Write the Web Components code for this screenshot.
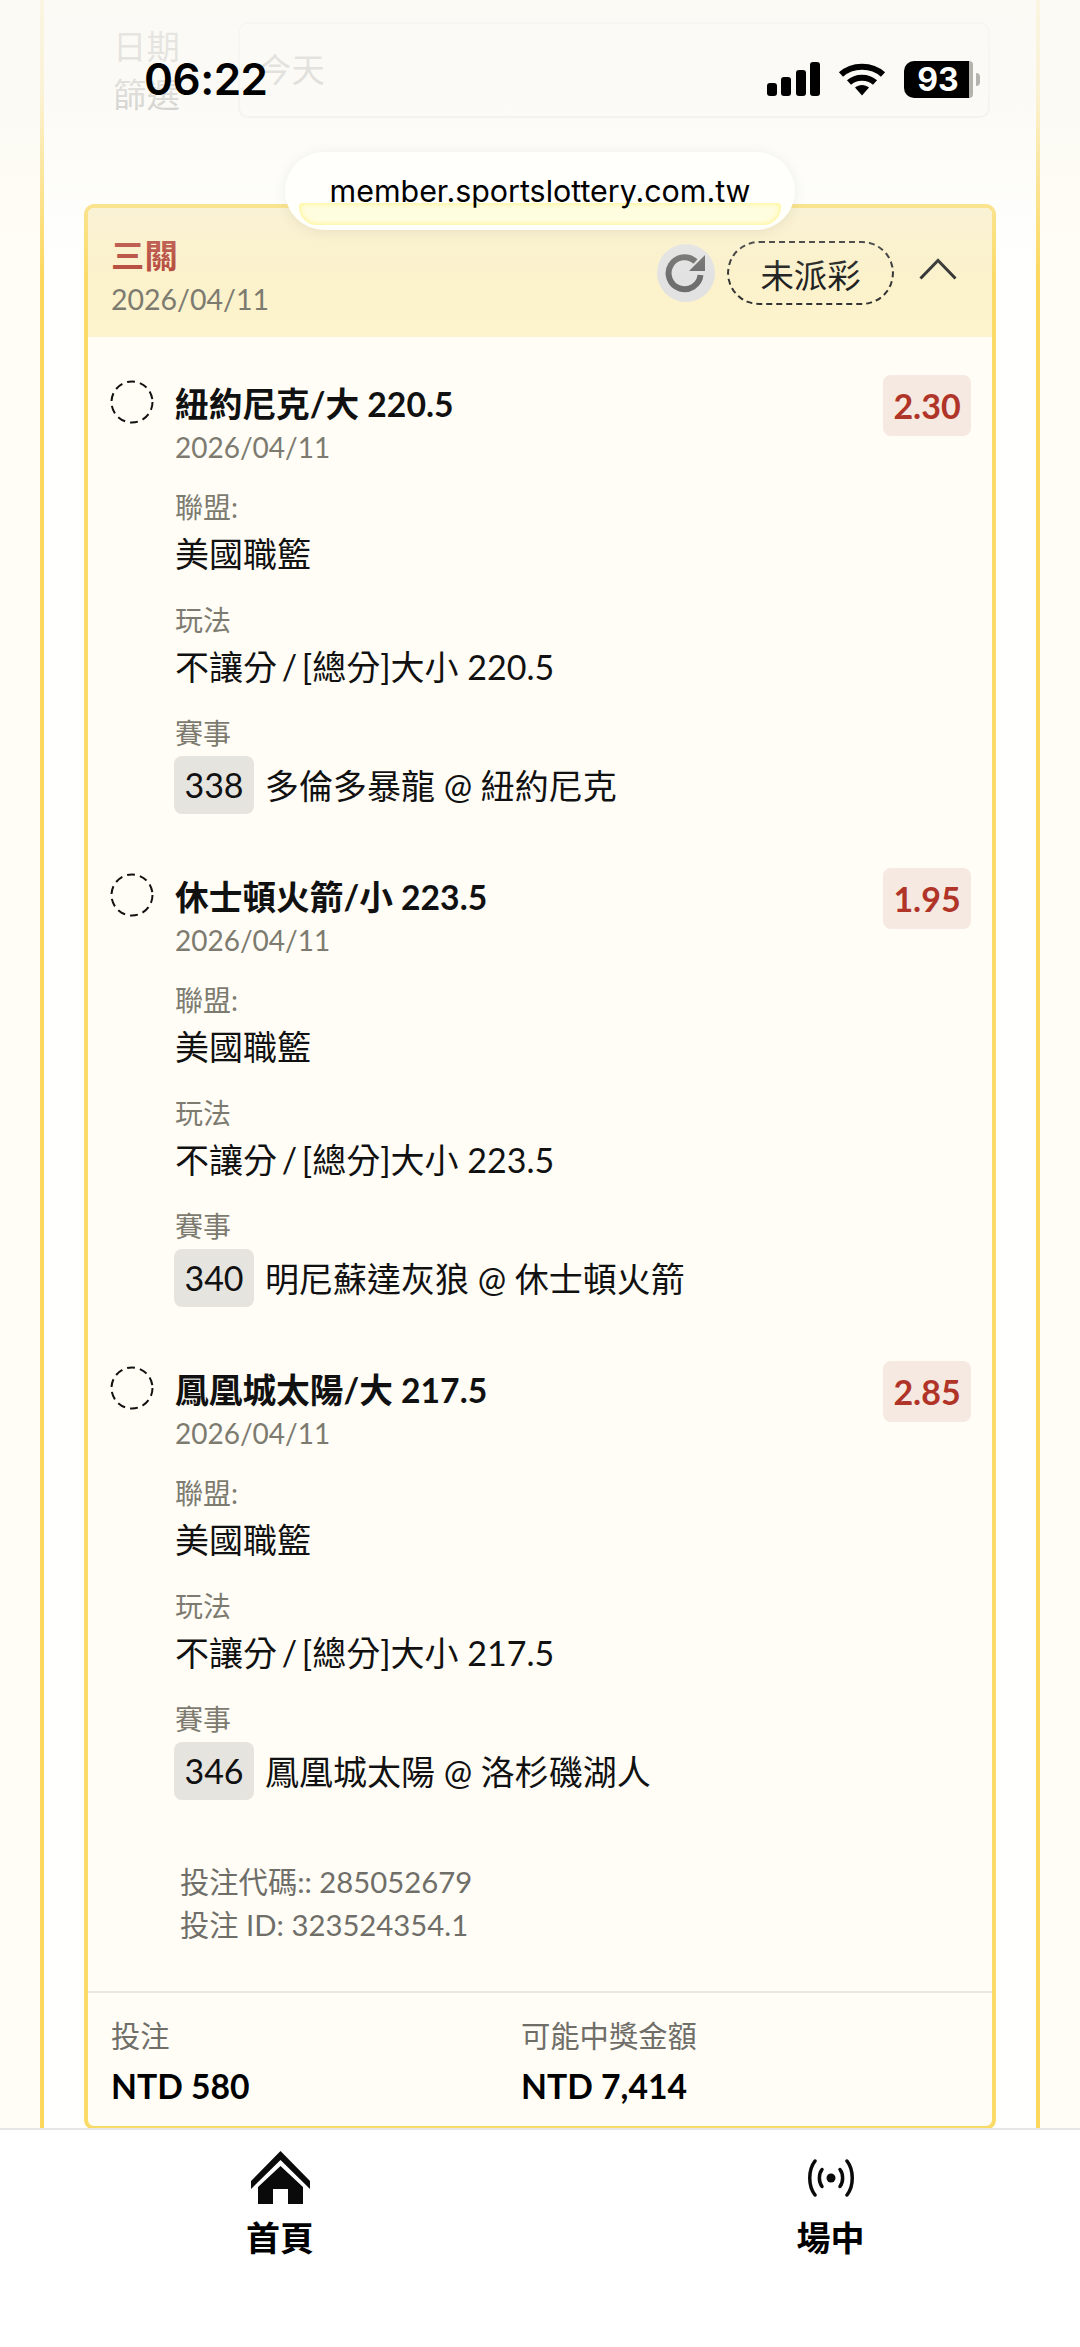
<!DOCTYPE html>
<html lang="zh-Hant">
<head>
<meta charset="utf-8">
<title>member.sportslottery.com.tw</title>
<style>
  html, body { margin: 0; height: 2347px; overflow: hidden; }
  body {
    position: relative;
    background: #fffdf5;
    font-family: Lato, "Noto Sans CJK TC", sans-serif;
    color: #111;
  }
  .panel {
    box-sizing: border-box;
    width: 1000px;
    height: 2347px;
    margin-left: 40px;
    padding: 22px 40px 0;
    background: #fffffd;
    border-left: 4px solid #fdd85d;
    border-right: 4px solid #fdd85d;
  }
  .tight { word-spacing: -4px; }
</style>
</head>
<body>
  <div class="panel">
    <date-filter>今天</date-filter>
    <bet-card>
      <span slot="type">三關</span>
      <span slot="date">2026/04/11</span>
      <span slot="status">未派彩</span>

      <bet-leg>
        <span slot="pick">紐約尼克/大 220.5</span>
        <span slot="date">2026/04/11</span>
        <span slot="odds">2.30</span>
        <span slot="market">不讓分<span class="tight"> / </span>[總分]大小 220.5</span>
        <span slot="code">338</span>
        <span slot="match">多倫多暴龍 @ 紐約尼克</span>
      </bet-leg>
      <bet-leg>
        <span slot="pick">休士頓火箭/小 223.5</span>
        <span slot="date">2026/04/11</span>
        <span slot="odds">1.95</span>
        <span slot="market">不讓分<span class="tight"> / </span>[總分]大小 223.5</span>
        <span slot="code">340</span>
        <span slot="match">明尼蘇達灰狼 @ 休士頓火箭</span>
      </bet-leg>
      <bet-leg>
        <span slot="pick">鳳凰城太陽/大 217.5</span>
        <span slot="date">2026/04/11</span>
        <span slot="odds">2.85</span>
        <span slot="market">不讓分<span class="tight"> / </span>[總分]大小 217.5</span>
        <span slot="code">346</span>
        <span slot="match">鳳凰城太陽 @ 洛杉磯湖人</span>
      </bet-leg>

      <span slot="code">投注代碼:: 285052679</span>
      <span slot="id">投注 ID: 323524354.1</span>
      <span slot="stake">NTD 580</span>
      <span slot="payout">NTD 7,414</span>
    </bet-card>
  </div>

  <status-bar></status-bar>
  <url-pill>member.sportslottery.com.tw</url-pill>
  <bottom-nav></bottom-nav>

<script>
const FONT = 'Lato, "Noto Sans CJK TC", sans-serif';

class DateFilter extends HTMLElement {
  constructor() {
    super();
    this.attachShadow({ mode: 'open' }).innerHTML = `
      <style>
        :host { display: flex; height: 96px; font-family: ${FONT}; }
        .label { width: 121px; padding-left: 29px; box-sizing: border-box; font-size: 33.4px; line-height: 48px; color: #777; }
        .box {
          width: 752px; margin-left: 33px; box-sizing: border-box;
          border: 2px solid #e6e6e6; border-radius: 10px; background: #fffffd;
          display: flex; align-items: center; padding: 0 0 6px 18px;
          font-size: 33.4px; color: #777;
        }
      </style>
      <div class="label">日期<br>篩選</div>
      <div class="box"><slot></slot></div>`;
  }
}

class BetCard extends HTMLElement {
  constructor() {
    super();
    this.attachShadow({ mode: 'open' }).innerHTML = `
      <style>
        :host {
          display: block; margin-top: 86px; box-sizing: border-box; height: 1926px;
          border: 4px solid #fbdb67; border-radius: 10px; background: #fffdf6;
          font-family: ${FONT}; overflow: hidden;
        }
        header {
          height: 129px; box-sizing: border-box; padding: 0 20px 0 23px;
          display: flex; align-items: flex-start; justify-content: space-between;
          background: linear-gradient(#f9efc8, #fdf3cd);
        }
        .type { font-size: 33.4px; line-height: 44px; font-weight: 700; color: #b5483a; margin-top: 25px; }
        .date { font-size: 28.5px; line-height: 38px; color: #7d7b70; margin-top: 3px; }
        .actions { display: flex; align-items: center; margin-top: 33px; }
        .refresh { width: 58px; height: 58px; border-radius: 50%; background: #e2e2e2; margin-right: 12px; }
        .refresh svg { display: block; }
        .status {
          box-sizing: border-box; width: 167px; height: 64px; border: 2px dashed #333; border-radius: 32px;
          font-size: 33.4px; color: #222; display: flex; align-items: center; justify-content: center;
        }
        .chev { display: block; margin: -8px 15px 0 25px; }
        .legs { padding: 45px 22px 0; display: flex; flex-direction: column; gap: 61.5px; box-sizing: border-box; }
        .refs { height: 191px; box-sizing: border-box; padding: 60px 0 0 92px; font-size: 29.3px; line-height: 43px; color: #6f6e68; }
        footer { border-top: 2px solid #e9e7e1; padding: 23px 22px 0 23px; display: grid; grid-template-columns: 410px 1fr; }
        footer small { display: block; font-size: 29.3px; line-height: 40px; color: #6f6e68; }
        footer b { display: block; font-size: 33.7px; line-height: 44px; font-weight: 700; color: #000; margin-top: 8px; }
      </style>
      <header>
        <div>
          <div class="type"><slot name="type"></slot></div>
          <div class="date"><slot name="date"></slot></div>
        </div>
        <div class="actions">
          <div class="refresh">
            <svg width="58" height="58" viewBox="0 0 58 58">
              <path d="M38.5 17.5A16 16 0 1 0 43.5 31" fill="none" stroke="#6e6e6e" stroke-width="6"/>
              <path d="M48 11V27H32Z" fill="#6e6e6e"/>
            </svg>
          </div>
          <div class="status"><slot name="status"></slot></div>
          <svg class="chev" width="38" height="22" viewBox="0 0 38 22"><path d="M1.500 20.500L19 2.500L36.500 20.500" fill="none" stroke="#333" stroke-width="3"/></svg>
        </div>
      </header>
      <div class="legs"><slot></slot></div>
      <div class="refs">
        <div><slot name="code"></slot></div>
        <div><slot name="id"></slot></div>
      </div>
      <footer>
        <div><small>投注</small><b><slot name="stake"></slot></b></div>
        <div><small>可能中獎金額</small><b><slot name="payout"></slot></b></div>
      </footer>`;
  }
}

class BetLeg extends HTMLElement {
  constructor() {
    super();
    this.attachShadow({ mode: 'open' }).innerHTML = `
      <style>
        :host { display: grid; grid-template-columns: 65px 1fr auto; font-family: ${FONT}; }
        svg { display: block; margin-top: -2px; }
        .body { min-width: 0; }
        .pick { font-size: 33.7px; line-height: 44px; font-weight: 700; color: #111; }
        .date { font-size: 28px; line-height: 38px; color: #7d7b70; margin-top: 2px; }
        .label { font-size: 28px; line-height: 38px; color: #7d7b70; margin-top: 23px; }
        .date + .label { margin-top: 22px; }
        .val { font-size: 34px; line-height: 48px; color: #111; margin-top: 4px; }
        .match { display: flex; align-items: center; gap: 11px; font-size: 34px; color: #111; margin-top: 3.5px; margin-left: -1px; }
        .code { box-sizing: border-box; width: 80px; height: 58px; border-radius: 8px; background: #e6e4df; display: flex; align-items: center; justify-content: center; }
        .odds {
          box-sizing: border-box; width: 88px; height: 61px; border-radius: 8px; background: #f5e9e1;
          color: #b03427; font-size: 34px; font-weight: 700; display: flex; align-items: center; justify-content: center;
          margin-top: -7px; margin-right: -1px;
        }
      </style>
      <svg width="44" height="44" viewBox="0 0 44 44"><circle cx="22" cy="22" r="20.5" fill="none" stroke="#111" stroke-width="2" stroke-dasharray="8 5"/></svg>
      <div class="body">
        <div class="pick"><slot name="pick"></slot></div>
        <div class="date"><slot name="date"></slot></div>
        <div class="label">聯盟:</div>
        <div class="val">美國職籃</div>
        <div class="label">玩法</div>
        <div class="val"><slot name="market"></slot></div>
        <div class="label">賽事</div>
        <div class="match"><span class="code"><slot name="code"></slot></span><slot name="match"></slot></div>
      </div>
      <div class="odds"><slot name="odds"></slot></div>`;
  }
}

class StatusBar extends HTMLElement {
  constructor() {
    super();
    this.attachShadow({ mode: 'open' }).innerHTML = `
      <style>
        :host {
          position: absolute; left: 0; top: 0; width: 1080px; height: 280px; box-sizing: border-box;
          background: linear-gradient(rgba(250,249,244,.88), rgba(250,249,244,.8) 90px, rgba(250,249,244,.3) 200px, rgba(250,249,244,0));
          font-family: Inter, sans-serif;
        }
        .bar { position: absolute; left: 144px; right: 111px; top: 56px; height: 46px; display: flex; align-items: center; color: #000; }
        .time { font-size: 44px; font-weight: 600; letter-spacing: -.5px; }
        .icons { margin-left: auto; display: flex; align-items: center; gap: 18px; }
        .batt { position: relative; box-sizing: border-box; padding-left: 3px; width: 65px; height: 37px; border-radius: 10px 0 0 10px; background: #000; color: #fff; font-size: 32px; font-weight: 700; display: flex; align-items: center; justify-content: center; }
        .strip { position: absolute; right: -4px; top: 0; width: 4px; height: 37px; border-radius: 0 8px 8px 0; background: #b5b3ad; }
        .cap { position: absolute; right: -11px; top: 12px; width: 4px; height: 13px; border-radius: 0 4px 4px 0; background: #b5b3ad; }
        svg { display: block; }
      </style>
      <div class="bar">
        <span class="time">06:22</span>
        <div class="icons">
          <svg width="53" height="34" viewBox="0 0 53 34" fill="#000">
            <rect x="0" y="21" width="10" height="13" rx="3"/>
            <rect x="14" y="15" width="10" height="19" rx="3"/>
            <rect x="29" y="8" width="10" height="26" rx="3"/>
            <rect x="43" y="0" width="10" height="34" rx="3"/>
          </svg>
          <svg width="48" height="34" viewBox="0 0 48 34" fill="none" stroke="#000" stroke-width="6">
            <path d="M3 12.500C14 2 34 2 45 12.500"/>
            <path d="M11 20.500C18 14 30 14 37 20.500"/>
            <path d="M17 25.500L24 33.500L31 25.500C27 22 21 22 17 25.500Z" fill="#000" stroke="none"/>
          </svg>
          <div class="batt">93<span class="strip"></span><span class="cap"></span></div>
        </div>
      </div>`;
  }
}

class UrlPill extends HTMLElement {
  constructor() {
    super();
    this.attachShadow({ mode: 'open' }).innerHTML = `
      <style>
        :host {
          position: absolute; left: 285px; top: 152px; width: 510px; height: 78px; box-sizing: border-box;
          border-radius: 39px; background: #fffffb; box-shadow: 0 2px 14px rgba(0,0,0,.07);
          font-family: Inter, sans-serif; font-size: 30.4px; color: #000; overflow: hidden;
        }
        .txt { position: absolute; left: 0; right: 0; top: 22px; line-height: 34px; text-align: center; z-index: 1; }
        .glow {
          position: absolute; left: 14px; right: 14px; top: 51px; height: 22px; border-radius: 4px 4px 18px 18px;
          background: #fffde0; box-shadow: inset 0 0 5px 1px #fdf48f;
        }
      </style>
      <div class="glow"></div>
      <div class="txt"><slot></slot></div>`;
  }
}

class BottomNav extends HTMLElement {
  constructor() {
    super();
    this.attachShadow({ mode: 'open' }).innerHTML = `
      <style>
        :host {
          position: absolute; left: 0; right: 0; top: 2128px; bottom: 0; box-sizing: border-box;
          background: #fff; border-top: 2px solid #e6e6e6; padding: 21px 0 0 5.5px;
          display: grid; grid-template-columns: 549px 552px; align-content: start;
          font-family: ${FONT};
        }
        .item { display: flex; flex-direction: column; align-items: center; font-size: 34px; font-weight: 700; line-height: 48px; color: #000; }
        .ic { height: 53px; display: flex; align-items: center; justify-content: center; margin-bottom: 10px; }
      </style>
      <div class="item">
        <div class="ic">
          <svg width="59" height="53" viewBox="0 0 59 53" fill="#0a0a0a">
            <path d="M29.5 0L59 30V38L29.5 9L0 38V30Z"/>
            <path d="M29.5 15L52 36V53H37V38H22V53H7V36Z"/>
          </svg>
        </div>
        首頁
      </div>
      <div class="item">
        <div class="ic">
          <svg width="46" height="38" viewBox="0 0 46 38" fill="none" stroke="#0a0a0a" stroke-width="3.5" stroke-linecap="round">
            <circle cx="23" cy="19" r="4.5" fill="#0a0a0a" stroke="none"/>
            <path d="M14 10.500C10.500 15 10.500 23 14 27.500"/>
            <path d="M32 10.500C35.500 15 35.500 23 32 27.500"/>
            <path d="M7 2C0 11 0 27 7 36"/>
            <path d="M39 2C46 11 46 27 39 36"/>
          </svg>
        </div>
        場中
      </div>`;
  }
}

customElements.define('date-filter', DateFilter);
customElements.define('bet-card', BetCard);
customElements.define('bet-leg', BetLeg);
customElements.define('status-bar', StatusBar);
customElements.define('url-pill', UrlPill);
customElements.define('bottom-nav', BottomNav);
</script>
</body>
</html>
